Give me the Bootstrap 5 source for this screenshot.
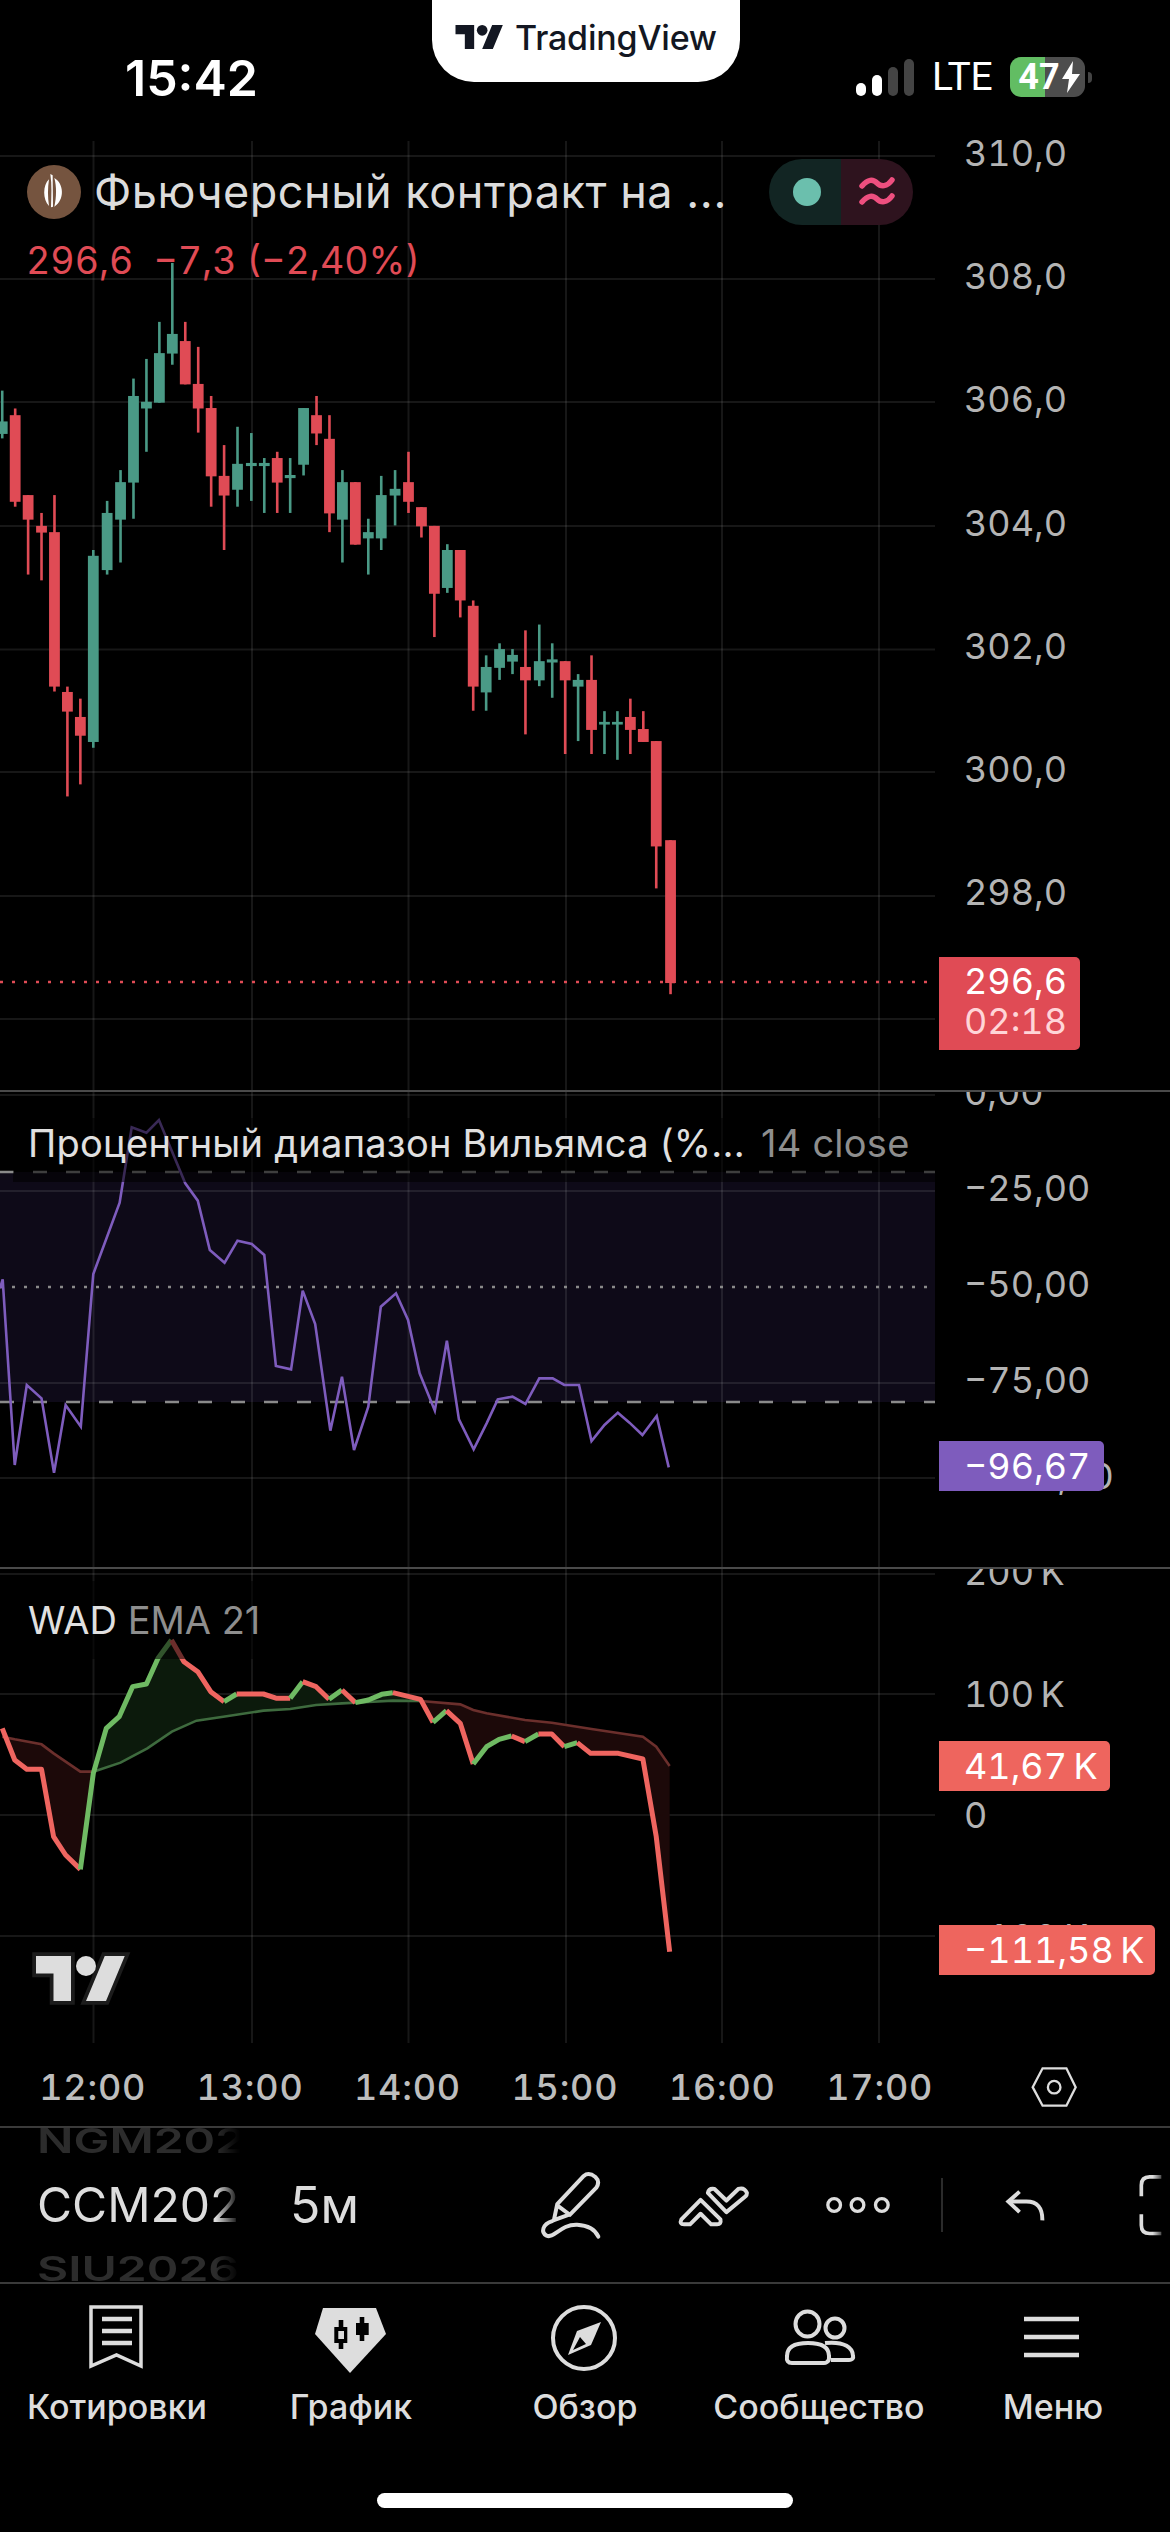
<!DOCTYPE html>
<html lang="ru">
<head>
  <meta charset="UTF-8" />
  <title>TradingView</title>
  <meta name="viewport" content="width=device-width, initial-scale=1" />
  <link href="https://cdn.jsdelivr.net/npm/bootstrap@5.3.3/dist/css/bootstrap.min.css" rel="stylesheet" />
  <style>
    html, body { background: #000; margin: 0; }
    .phone { width: 1170px; height: 2532px; overflow: hidden; background: #000; font-family: Inter, "Noto Sans", sans-serif; color: #ddd; }

    /* status bar */
    .status-strip { height: 140px; }
    .clock-slot { width: 432px; padding: 50px 0 0 125px; font-size: 50px; font-weight: 600; line-height: 56px; color: #fff; }
    .tv-notch { width: 308px; height: 82px; background: #fff; border-radius: 0 0 42px 42px; gap: 11px; padding-bottom: 8px; color: #131722; font-size: 34px; font-weight: 500; letter-spacing: -.2px; }
    .tv-notch svg { width: 49px; height: 24px; }
    .net-slot { padding: 57px 0 0 116px; }
    .lte-text { font-family: Roboto, sans-serif; font-size: 39px; line-height: 40px; color: #fff; margin: 0 18px; letter-spacing: -.3px; }
    .batt { position: relative; width: 75px; height: 40px; border-radius: 11px; background: linear-gradient(90deg, #62bd63 47%, #4d4d4d 47%); padding-left: 8px; font-family: Roboto, sans-serif; font-size: 36px; font-weight: 700; line-height: 40px; color: #fff; gap: 2px; }
    .batt::after { content: ""; position: absolute; left: 78px; top: 15px; width: 4px; height: 11px; background: #444; border-radius: 0 4px 4px 0; }

    /* panes */
    .pane { position: relative; overflow: hidden; }
    .pane-main { height: 950px; }
    .pane-wr { height: 477px; border-top: 2px solid #4a4a4a; }
    .pane-wad { height: 476px; border-top: 2px solid #4a4a4a; }
    .plot { display: block; width: 935px; flex: none; }
    .scale-col { width: 235px; flex: none; position: relative; padding-left: 29px; font-size: 36px; color: #b4b4b4; white-space: nowrap; font-variant-numeric: tabular-nums; }
    .scale-main .tick { height: 123.2px; }
    .scale-main .tick:first-child { margin-top: -48.6px; }
    .scale-wr .tick { height: 96px; }
    .scale-wr .tick:first-child { margin-top: -48px; }
    .scale-wad .tick { height: 121.5px; }
    .scale-wad .tick:first-child { margin-top: -57.7px; }
    .tick { display: flex; align-items: center; }
    .tag { position: absolute; left: 4px; padding-left: 25px; border-radius: 0 5px 5px 0; color: #fff; font-size: 36px; line-height: 50px; height: 50px; }
    .tag-price { top: 817px; width: 141px; height: 93px; background: #e04b55; line-height: 40px; padding-top: 4px; }
    .tag-price span { display: block; color: #ffd5d8; }
    .tag-wr { top: 349px; width: 165px; background: #7e5cbd; }
    .tag-wad { top: 172px; width: 171px; background: #ee655e; }
    .tag-wad2 { top: 356px; width: 216px; background: #ee655e; }

    /* legends */
    .legend-main { position: absolute; left: 27px; top: 25px; }
    .sym-title { font-size: 45px; line-height: 54px; color: #dcdcdc; margin-left: 13px; letter-spacing: .55px; white-space: nowrap; }
    .sym-logo { width: 54px; height: 54px; flex: none; }
    .quote-line { font-size: 37.500px; line-height: 44px; color: #e04b55; margin: 20px 0 0 -1px; white-space: pre; font-variant-numeric: tabular-nums; }
    .mode-pill { position: absolute; left: 769px; top: 19px; width: 144px; height: 66px; border-radius: 33px; overflow: hidden; }
    .mode-pill div:first-child { width: 72px; padding-left: 3px; background: #122523; }
    .mode-pill div:last-child { flex: 1; background: #2e131e; }
    .mode-dot { width: 28px; height: 28px; border-radius: 50%; background: #6bbfad; }
    .legend-wr { position: absolute; left: 13px; top: 26px; width: 922px; height: 64px; padding-left: 15px; background: rgba(0,0,0,.55); font-size: 38px; line-height: 50px; letter-spacing: .25px; color: #e0e0e0; white-space: nowrap; }
    .legend-wr em, .legend-wad em { font-style: normal; color: #8e8e8e; }
    .legend-wr em { margin-left: 16px; }
    .legend-wad { position: absolute; left: 13px; top: 12px; height: 78px; padding: 14px 15px 0; background: rgba(0,0,0,.55); font-size: 38px; line-height: 50px; color: #e0e0e0; white-space: nowrap; }

    /* time axis */
    .time-axis { height: 85px; padding: 4px 0 0 14px; border-bottom: 2px solid #3a3a3a; font-size: 36px; font-weight: 500; letter-spacing: .8px; color: #bdbdbd; font-variant-numeric: tabular-nums; }
    .time-axis span { width: 157.400px; text-align: center; }
    .gear-mark { width: 47px; height: 42px; margin-left: auto; margin-right: 92px; }

    /* toolbar */
    .tool-strip { height: 156px; border-bottom: 2px solid #3a3a3a; overflow: hidden; }
    .sym-wheel { width: 203px; margin-left: 37px; height: 154px; overflow: hidden; -webkit-mask-image: linear-gradient(90deg, #000 88%, transparent); mask-image: linear-gradient(90deg, #000 88%, transparent); font-size: 48px; line-height: 64px; white-space: nowrap; color: #ddd; }
    .sym-wheel .far { color: #2c2c2c; font-weight: 600; transform: scaleY(.7); transform-origin: left center; }
    .tf-label { width: 270px; padding-left: 50px; font-size: 50px; color: #ddd; }
    .slot { display: flex; justify-content: center; align-items: center; flex: none; }
    .slot svg { display: block; }
    .s1 { width: 120px; } .s2 { width: 166px; } .s3 { width: 122px; } .s4 { width: 47px; } .s5 { width: 120px; }
    .s6 { width: 85px; padding-left: 53px; justify-content: flex-start; }
    .v-sep { width: 2px; height: 54px; background: #2b2b2b; }

    /* tab bar */
    .tab-item { padding-top: 21px; text-align: center; font-size: 34px; font-weight: 500; color: #ddd; line-height: 40px; white-space: nowrap; }
    .tab-item svg { display: block; margin: 0 auto 12px; width: 110px; height: 70px; }
    .home-bar { width: 416px; height: 15px; border-radius: 8px; background: #fff; margin: 66px auto 0; }
  </style>
</head>
<body>
<div class="phone d-flex flex-column">

  <!-- status bar -->
  <div class="status-strip d-flex align-items-start flex-none">
    <div class="clock-slot">15:42</div>
    <div class="tv-notch d-flex align-items-center justify-content-center">
      <svg viewBox="0 4 36 18" fill="#131722"><path d="M14 22H7V11H0V4h14v18zM28 22h-8l7.5-18h8L28 22z"/><circle cx="20" cy="8" r="4"/></svg>
      <span>TradingView</span>
    </div>
    <div class="net-slot d-flex align-items-center">
      <svg width="58" height="40" viewBox="0 0 58 40"><rect x="0" y="26" width="10" height="13" rx="5" fill="#fff"/><rect x="16" y="18" width="10" height="21" rx="5" fill="#fff"/><rect x="32" y="10" width="10" height="29" rx="5" fill="#444"/><rect x="48" y="2" width="10" height="37" rx="5" fill="#444"/></svg>
      <span class="lte-text">LTE</span>
      <div class="batt d-flex align-items-center">
        <span>47</span>
        <svg width="18" height="32" viewBox="0 0 18 32" fill="#fff"><path d="M11 0 0 18h7L5 32 18 13h-8z"/></svg>
      </div>
    </div>
  </div>

  <!-- price pane -->
  <div class="pane pane-main d-flex">
    <svg class="plot" id="plotMain" height="950" viewBox="0 140 935 950"></svg>
    <div class="scale-col scale-main">
      <div class="tick">310,0</div><div class="tick">308,0</div><div class="tick">306,0</div><div class="tick">304,0</div>
      <div class="tick">302,0</div><div class="tick">300,0</div><div class="tick">298,0</div><div class="tick">296,0</div>
      <div class="tag tag-price">296,6<span>02:18</span></div>
    </div>
    <div class="legend-main">
      <div class="d-flex align-items-center">
        <svg class="sym-logo" viewBox="81 45 162 162"><circle cx="162" cy="126" r="81" fill="#75543f"/><path fill="#fff" d="M147 88C128 105 128 150 147 168C143 140 143 115 147 88ZM163 84C192 100 195 150 163 170C170 140 170 110 163 84ZM151 72 158 76 159 170 153 172C154 140 156 105 151 72Z"/></svg>
        <span class="sym-title">Фьючерсный контракт на ...</span>
      </div>
      <div class="quote-line">296,6  −7,3 (−2,40%)</div>
    </div>
    <div class="mode-pill d-flex">
      <div class="d-flex align-items-center justify-content-center"><span class="mode-dot"></span></div>
      <div class="d-flex align-items-center justify-content-center">
        <svg width="36" height="32" viewBox="0 0 36 32" fill="none" stroke="#ee4f7f" stroke-width="5.500" stroke-linecap="round"><path d="M3 10C9 3 14 3 18 7S28 11 33 4M3 26C9 19 14 19 18 23S28 27 33 20"/></svg>
      </div>
    </div>
  </div>

  <!-- williams pane -->
  <div class="pane pane-wr d-flex">
    <svg class="plot" id="plotWr" height="475" viewBox="0 1092 935 475"></svg>
    <div class="scale-col scale-wr">
      <div class="tick">0,00</div><div class="tick">−25,00</div><div class="tick">−50,00</div><div class="tick">−75,00</div><div class="tick">−100,00</div>
      <div class="tag tag-wr">−96,67</div>
    </div>
    <div class="legend-wr">Процентный диапазон Вильямса (%...<em>14 close</em></div>
  </div>

  <!-- wad pane -->
  <div class="pane pane-wad d-flex">
    <svg class="plot" id="plotWad" height="474" viewBox="0 1569 935 474"></svg>
    <div class="scale-col scale-wad">
      <div class="tick">200&#8201;K</div><div class="tick">100&#8201;K</div><div class="tick">0</div><div class="tick">−100&#8201;K</div>
      <div class="tag tag-wad">41,67&#8201;K</div>
      <div class="tag tag-wad2">−111,58&#8201;K</div>
    </div>
    <div class="legend-wad">WAD <em>EMA 21</em></div>
  </div>

  <!-- time axis -->
  <div class="time-axis d-flex align-items-center">
    <span>12:00</span><span>13:00</span><span>14:00</span><span>15:00</span><span>16:00</span><span>17:00</span>
    <svg class="gear-mark" viewBox="333 15 142 127" fill="none" stroke="#ddd" stroke-width="7"><path d="M338 79 368 22H440L468 79 440 135H368Z"/><circle cx="403" cy="79" r="19"/></svg>
  </div>

  <!-- toolbar -->
  <div class="tool-strip d-flex align-items-center">
    <div class="sym-wheel d-flex flex-column justify-content-center">
      <div class="far">NGM2026</div>
      <div>CCM2026</div>
      <div class="far">SIU2026</div>
    </div>
    <div class="tf-label">5м</div>
    <div class="slot s1"><svg width="63" height="72" viewBox="55 25 190 215" fill="none" stroke="#ddd" stroke-width="12" stroke-linecap="round" stroke-linejoin="round"><path d="M100 178 110 130 190 45Q205 32 225 48 240 62 228 80L150 160ZM112 135 148 162"/><path d="M95 181C65 190 60 215 78 225 100 235 120 190 170 192 205 194 225 208 234 228"/></svg></div>
    <div class="slot s2"><svg width="72" height="43" viewBox="470 65 215 130" fill="none" stroke="#ddd" stroke-width="12" stroke-linejoin="round"><path d="M482 172 540 113 600 172Q603 187 590 187H572L540 155 508 187H490Q475 187 482 172Z"/><path d="M562 92Q565 77 582 80L618 115 654 80Q672 74 680 92 680 98 676 102L618 150Z"/></svg></div>
    <div class="slot s3"><svg width="67" height="20" viewBox="910 105 200 60" fill="none" stroke="#ddd" stroke-width="10"><circle cx="940" cy="135" r="19"/><circle cx="1010" cy="135" r="19"/><circle cx="1083" cy="135" r="19"/></svg></div>
    <div class="slot s4"><div class="v-sep"></div></div>
    <div class="slot s5"><svg width="43" height="33" viewBox="250 385 130 100" fill="none" stroke="#ddd" stroke-width="12"><path d="M297 393 263 423 297 455"/><path d="M263 423H318Q367 423 366 480"/></svg></div>
    <div class="slot s6"><svg width="24" height="62" viewBox="655 342 72 185" fill="none" stroke="url(#bracketFade)" stroke-width="11"><defs><linearGradient id="bracketFade" gradientUnits="userSpaceOnUse" x1="660" y1="0" x2="725" y2="0"><stop offset=".6" stop-color="#ddd"/><stop offset="1" stop-color="#ddd" stop-opacity=".35"/></linearGradient></defs><path d="M725 350H690Q665 350 665 375V408M665 462V495Q665 520 690 520H725"/></svg></div>
  </div>

  <!-- tab bar -->
  <div class="row g-0">
    <div class="col tab-item">
      <svg viewBox="62 2305 110 70" fill="none" stroke="#ddd"><path stroke-width="3.500" d="M91 2307H141V2366L116.500 2355 91 2366Z"/><path stroke-width="4.400" d="M102 2319H132M102 2331H132M102 2343H132"/></svg>
      Котировки
    </div>
    <div class="col tab-item">
      <svg viewBox="296 2305 110 70" fill="#ddd"><path d="M323 2308H376L386 2334 350 2373 315 2334Z"/><path fill="#000" fill-rule="evenodd" d="M338.700 2320h4.600v7h4v16h-4v6h-4.600v-6h-4.400v-16h4.400zM338.300 2331v8h5.700v-8z"/><path fill="#000" d="M359.700 2317h4.600v6h4.400v12h-4.400v6h-4.600v-6h-3.700v-12h3.700z"/></svg>
      График
    </div>
    <div class="col tab-item">
      <svg viewBox="530 2305 110 70" fill="none"><circle cx="584" cy="2338" r="31" stroke="#ddd" stroke-width="4"/><path fill="#ddd" d="M601 2322 591 2345 568 2355 577 2331Z"/><path fill="#000" d="M580 2337 586 2344 573 2350Z"/></svg>
      Обзор
    </div>
    <div class="col tab-item">
      <svg viewBox="764 2305 110 70" fill="none" stroke="#ddd" stroke-width="4"><ellipse cx="807.500" cy="2324" rx="12" ry="12.500"/><circle cx="835" cy="2328" r="9.500"/><path d="M787 2356C787 2347 795 2343 808 2343 821 2343 829 2347 829 2356 830 2363 824 2363 824 2363H792Q786 2363 787 2356Z"/><path d="M825 2343C845 2341 853 2348 853 2356 854 2360 849 2360 849 2360H831"/></svg>
      Сообщество
    </div>
    <div class="col tab-item">
      <svg viewBox="998 2305 110 70" stroke="#ddd" stroke-width="4.500"><path d="M1024 2319H1079M1024 2337H1079M1024 2355H1079"/></svg>
      Меню
    </div>
  </div>
  <div class="home-bar"></div>
</div>

<script>
  const NS = 'http://www.w3.org/2000/svg';
  const GREEN = '#4a9a86', RED = '#e04b55';
  const VLINES = [93.5, 252, 408.5, 566, 722, 879];

  function add(svg, tag, attrs) {
    const el = document.createElementNS(NS, tag);
    Object.entries(attrs).forEach(([k, v]) => el.setAttribute(k, v));
    svg.appendChild(el);
    return el;
  }

  function grid(svg, top, bottom, rows) {
    VLINES.forEach(x => add(svg, 'line', { x1: x, x2: x, y1: top, y2: bottom, stroke: '#fff', 'stroke-opacity': .09, 'stroke-width': 2 }));
    rows.forEach(y => add(svg, 'line', { x1: 0, x2: 935, y1: y, y2: y, stroke: '#fff', 'stroke-opacity': .09, 'stroke-width': 2 }));
  }

  // candles: [x, high, top, bottom, low, up?] read off a 2.24x crop starting at y=300
  const candles = [
    [5,203,272,300,310,1],[34,243,258,452,463,0],[63,437,437,492,615,0],[93,477,506,521,628,0],
    [122,437,520,866,877,0],[151,866,878,922,1112,0],[180,893,934,976,1085,0],[209,560,573,990,1003,1],
    [240,450,477,605,615,1],[270,381,408,492,588,1],[299,176,215,409,490,1],[328,132,228,243,340,1],
    [357,49,119,230,230,1],[386,-83,76,120,145,1],[415,49,92,189,189,0],[444,105,188,243,297,0],
    [473,215,242,395,463,0],[502,325,394,438,560,0],[532,284,367,425,463,1],[563,298,365,372,450,1],
    [592,354,365,372,477,1],[621,340,354,409,477,0],[650,354,392,399,477,1],[680,242,242,369,393,1],
    [709,215,258,299,325,0],[738,258,311,478,520,0],[767,381,408,492,588,1],[796,408,408,548,548,0],
    [825,490,520,534,615,1],[854,394,437,534,560,1],[885,381,423,438,505,1],[915,340,408,452,477,0],
    [944,464,464,507,532,0],[973,506,506,658,755,0],[1002,547,560,645,656,1],[1031,560,560,673,711,0],
    [1060,673,685,866,920,0],[1089,796,822,879,920,1],[1119,769,782,824,851,1],[1148,782,795,810,838,1],
    [1177,740,822,852,973,0],[1208,727,809,852,865,1],[1237,769,805,812,891,1],[1266,809,809,852,1017,0],
    [1295,838,851,866,988,1],[1325,796,851,963,1017,0],[1354,921,945,951,1017,1],[1383,921,945,951,1030,1],
    [1412,893,934,963,1017,0],[1441,921,961,990,990,0],[1470,988,988,1224,1318,0],[1502,1210,1210,1530,1555,0]
  ];

  const main = document.getElementById('plotMain');
  grid(main, 141, 1090, [156, 279, 402, 526, 649.5, 772, 896, 1019]);
  candles.forEach(([x, hi, top, bot, lo, up]) => {
    const cx = x / 2.24, fill = up ? GREEN : RED;
    add(main, 'rect', { x: cx - 1.3, y: 300 + hi / 2.24, width: 2.6, height: (lo - hi) / 2.24, fill });
    add(main, 'rect', { x: cx - 5.4, y: 300 + top / 2.24, width: 10.8, height: (bot - top) / 2.24, fill });
  });
  add(main, 'line', { x1: 0, x2: 930, y1: 982, y2: 982, stroke: RED, 'stroke-width': 2.4, 'stroke-dasharray': '3 9' });

  // williams %R
  const wr = document.getElementById('plotWr');
  add(wr, 'rect', { x: 0, y: 1172, width: 935, height: 230, fill: '#0e0a18' });
  grid(wr, 1092, 1567, [1095, 1191, 1383, 1478]);
  const dash = { x1: 0, x2: 935, 'stroke-width': 2.4, stroke: '#8a8a8a' };
  add(wr, 'line', { ...dash, y1: 1172, y2: 1172, 'stroke-dasharray': '14 19' });
  add(wr, 'line', { ...dash, y1: 1402, y2: 1402, 'stroke-dasharray': '14 19' });
  add(wr, 'line', { ...dash, y1: 1287, y2: 1287, 'stroke-dasharray': '3 9' });
  const wrPts = [[0,625],[6,598],[33,1155],[60,915],[93,955],[121,1178],[147,975],[181,1040],[209,582],[268,368],[295,142],[328,158],[356,120],[415,310],[443,362],[470,510],[503,548],[532,482],[564,492],[592,525],[618,858],[652,868],[678,632],[706,732],[740,1052],[766,890],[793,1110],[825,980],[853,680],[887,640],[914,720],[940,880],[974,992],[1001,782],[1028,1018],[1061,1108],[1090,1030],[1115,958],[1148,950],[1177,972],[1208,895],[1238,895],[1264,915],[1297,915],[1325,1083],[1354,1035],[1384,998],[1410,1028],[1439,1065],[1471,1008],[1498,1162]];
  add(wr, 'polyline', { points: wrPts.map(([x, y]) => `${x / 2.24},${1080 + y / 3}`).join(' '), fill: 'none', stroke: '#7e5cbd', 'stroke-width': 2.6 });

  // wad
  const wad = document.getElementById('plotWad');
  grid(wad, 1569, 2043, [1574, 1694, 1815, 1936]);
  const wp = ([x, y]) => `${x / 2.24},${1560 + y / 3}`;
  const LINE_GREEN = '#6fba63', LINE_RED = '#ef6560';
  const segs = [
    [0, [[5,505],[33,600],[60,628],[93,628],[120,830],[147,885],[180,928]]],
    [1, [[180,928],[209,640],[238,505],[267,470],[297,380],[328,372],[354,295],[384,240]]],
    [0, [[384,240],[412,305],[443,335],[472,395],[502,425]]],
    [1, [[502,425],[530,402]]],
    [0, [[530,402],[590,402],[620,415],[650,415]]],
    [1, [[650,415],[678,365]]],
    [0, [[678,365],[708,380],[737,418]]],
    [1, [[737,418],[766,390]]],
    [0, [[766,390],[796,428]]],
    [1, [[796,428],[825,420],[855,403],[880,398]]],
    [0, [[880,398],[942,418],[970,487]]],
    [1, [[970,487],[1000,452]]],
    [0, [[1000,452],[1031,490],[1060,612]]],
    [1, [[1060,612],[1090,560],[1118,538],[1146,528]]],
    [0, [[1146,528],[1176,545]]],
    [1, [[1176,545],[1206,522]]],
    [0, [[1206,522],[1236,522],[1264,560]]],
    [1, [[1264,560],[1293,548]]],
    [0, [[1293,548],[1323,580],[1385,580],[1440,597],[1470,830],[1500,1175]]]
  ];
  const emaRed1 = [[5,530],[33,538],[93,553],[120,580],[180,635],[209,635]];
  const emaGreen = [[209,635],[270,608],[330,565],[385,515],[440,482],[500,470],[590,452],[650,447],[708,435],[766,430],[825,426],[880,422],[942,423]];
  const emaRed2 = [[942,423],[1031,433],[1060,450],[1090,460],[1176,480],[1236,488],[1325,507],[1440,530],[1470,560],[1500,618]];

  // fills between wad and its ema
  const line = segs.flatMap(s => s[1]);
  const between = (a, b) => line.filter(([x]) => x >= a && x <= b);
  add(wad, 'polygon', { points: [...between(5, 180), [209,640], ...emaRed1.slice().reverse()].map(wp).join(' '), fill: '#1c0909' });
  add(wad, 'polygon', { points: [...between(209, 942), ...emaGreen.slice().reverse()].map(wp).join(' '), fill: '#0c1a0c' });
  add(wad, 'polygon', { points: [...between(942, 1500), ...emaRed2.slice().reverse()].map(wp).join(' '), fill: '#1c0909' });

  [[emaRed1, '#6b2f2c'], [emaGreen, '#3e6b3e'], [emaRed2, '#6b2f2c']].forEach(([pts, stroke]) => {
    add(wad, 'polyline', { points: pts.map(wp).join(' '), fill: 'none', stroke, 'stroke-width': 2.6 });
  });
  segs.forEach(([up, pts]) => {
    add(wad, 'polyline', { points: pts.map(wp).join(' '), fill: 'none', stroke: up ? LINE_GREEN : LINE_RED, 'stroke-width': 5, 'stroke-linejoin': 'round' });
  });

  // tv watermark
  const mark = add(wad, 'g', { transform: 'translate(36 1946) scale(2.5)' });
  add(mark, 'path', { d: 'M14 22H7V11H0V4h14v18zM28 22h-8l7.5-18h8L28 22z', fill: '#ddd', stroke: '#1c1c1c', 'stroke-width': 3, 'paint-order': 'stroke' });
  add(mark, 'circle', { cx: 20, cy: 8, r: 4, fill: '#ddd' });
</script>
<script src="https://cdn.jsdelivr.net/npm/bootstrap@5.3.3/dist/js/bootstrap.bundle.min.js"></script>
</body>
</html>
